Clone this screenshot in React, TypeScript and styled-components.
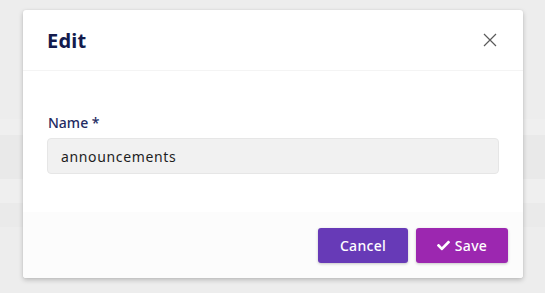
import styled, { createGlobalStyle } from "styled-components";
import { FaCheck } from "react-icons/fa";

const GlobalStyle = createGlobalStyle`
  html, body {
    margin: 0;
    padding: 0;
    background: #ededed;
    font-family: "Noto Sans", "Open Sans", sans-serif;
  }
`;

interface BandProps {
  h: number;
  shade: string;
}

const Page = styled.div`
  position: relative;
  width: 545px;
  height: 293px;
  overflow: hidden;
  background: #ededed;
`;

const Band = styled.div<BandProps>`
  height: ${(props) => props.h}px;
  background: ${(props) => props.shade};
`;

const Modal = styled.div`
  position: absolute;
  top: 10px;
  left: 23px;
  width: 500px;
  background: #ffffff;
  border-radius: 3px;
  box-shadow: 0 2px 5px rgba(0, 0, 0, 0.22), 0 0 2px rgba(0, 0, 0, 0.06);
  overflow: hidden;
`;

const Header = styled.div`
  display: flex;
  align-items: center;
  justify-content: space-between;
  height: 60px;
  padding: 0 24px;
  border-bottom: 1px solid #f4f4f4;
`;

const Title = styled.h2`
  margin: 0;
  font-size: 20px;
  font-weight: 700;
  color: #141b4d;
  letter-spacing: 0.2px;
`;

const CloseButton = styled.button`
  display: flex;
  align-items: center;
  justify-content: center;
  width: 16px;
  height: 16px;
  padding: 0;
  margin-right: 1px;
  border: none;
  background: transparent;
  cursor: pointer;
`;

const Body = styled.div`
  padding: 41px 24px 38px;
`;

const Label = styled.label`
  display: block;
  padding-left: 1px;
  margin-bottom: 4px;
  font-size: 14px;
  line-height: 22px;
  font-weight: 500;
  color: #242b62;
`;

const Input = styled.input`
  box-sizing: border-box;
  display: block;
  width: 100%;
  height: 36px;
  padding: 0 13px;
  border: 1px solid #e6e6e6;
  border-radius: 4px;
  background: #f1f1f1;
  font-family: inherit;
  font-size: 14px;
  letter-spacing: 0.65px;
  color: #1e1e1e;
  outline: none;
`;

const Footer = styled.div`
  display: flex;
  justify-content: flex-end;
  gap: 8px;
  padding: 16px 15px 15px;
  background: #fcfcfc;
`;

const Button = styled.button<{ tone: string; wide?: boolean }>`
  display: flex;
  align-items: center;
  justify-content: center;
  gap: 5px;
  width: ${(props) => (props.wide ? "92px" : "90px")};
  height: 35px;
  border: none;
  border-radius: 3px;
  background: ${(props) => props.tone};
  box-shadow: 0 1px 3px rgba(0, 0, 0, 0.22);
  color: #ffffff;
  font-family: inherit;
  font-size: 14px;
  font-weight: 500;
  letter-spacing: 0.3px;
  cursor: pointer;
`;

const bands: BandProps[] = [
  { h: 119, shade: "#ededed" },
  { h: 16, shade: "#efefef" },
  { h: 44, shade: "#e9e9e9" },
  { h: 24, shade: "#efefef" },
  { h: 24, shade: "#eaeaea" },
  { h: 66, shade: "#ededed" },
];

export default function App() {
  return (
    <>
      <GlobalStyle />
      <Page>
        {bands.map((band, i) => (
          <Band key={i} h={band.h} shade={band.shade} />
        ))}
        <Modal>
          <Header>
            <Title>Edit</Title>
            <CloseButton aria-label="Close">
              <svg width="14" height="14" viewBox="0 0 14 14">
                <path
                  d="M1 1 L13 13 M13 1 L1 13"
                  stroke="#5a5a5a"
                  strokeWidth="1.2"
                  fill="none"
                />
              </svg>
            </CloseButton>
          </Header>
          <Body>
            <Label htmlFor="name">Name *</Label>
            <Input id="name" defaultValue="announcements" />
          </Body>
          <Footer>
            <Button tone="#673ab7">Cancel</Button>
            <Button tone="#9c27b0" wide>
              <FaCheck size={13} />
              Save
            </Button>
          </Footer>
        </Modal>
      </Page>
    </>
  );
}
